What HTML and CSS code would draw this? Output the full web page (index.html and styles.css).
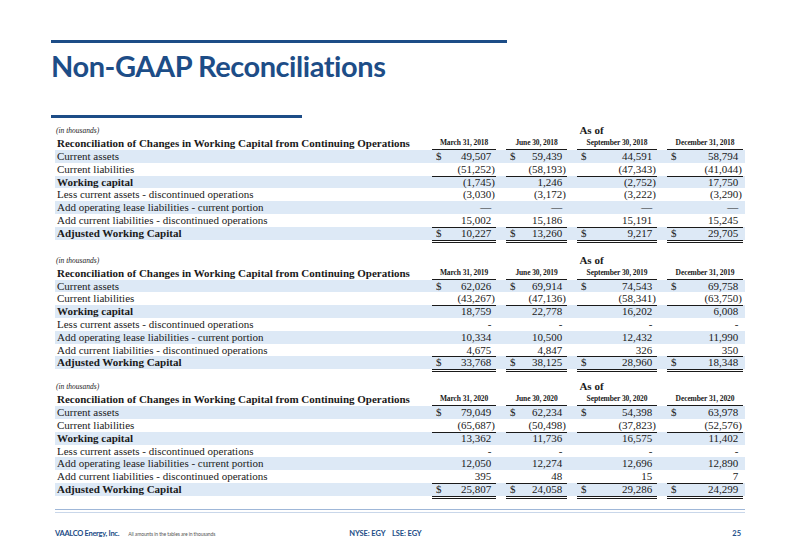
FILE: index.html
```html
<!DOCTYPE html>
<html lang="en">
<head>
<meta charset="utf-8">
<title>Non-GAAP Reconciliations</title>
<link rel="stylesheet" href="styles.css">
</head>
<body>
<div class="slide">
  <header class="head-block">
    <div class="rule rule-top"></div>
    <h1 class="title">Non-GAAP Reconciliations</h1>
    <div class="rule rule-sub"></div>
  </header>

  <main class="tables">
    <div class="recon">
      <div class="row cap"><span class="unit">(in thousands)</span><span class="asof">As of</span></div>
      <div class="row head"><span class="lbl">Reconciliation of Changes in Working Capital from Continuing Operations</span><span class="date">March 31, 2018</span><span class="date">June 30, 2018</span><span class="date">September 30, 2018</span><span class="date">December 31, 2018</span></div>
      <div class="row stripe"><span class="lbl">Current assets</span><span class="num"><i>$</i>49,507<b>)</b></span><span class="num"><i>$</i>59,439<b>)</b></span><span class="num"><i>$</i>44,591<b>)</b></span><span class="num"><i>$</i>58,794<b>)</b></span></div>
      <div class="row"><span class="lbl">Current liabilities</span><span class="num ul">(51,252)</span><span class="num ul">(58,193)</span><span class="num ul">(47,343)</span><span class="num ul">(41,044)</span></div>
      <div class="row stripe bold"><span class="lbl">Working capital</span><span class="num">(1,745)</span><span class="num">1,246<b>)</b></span><span class="num">(2,752)</span><span class="num">17,750<b>)</b></span></div>
      <div class="row"><span class="lbl">Less current assets - discontinued operations</span><span class="num">(3,030)</span><span class="num">(3,172)</span><span class="num">(3,222)</span><span class="num">(3,290)</span></div>
      <div class="row stripe"><span class="lbl">Add operating lease liabilities - current portion</span><span class="num">—<b>)</b></span><span class="num">—<b>)</b></span><span class="num">—<b>)</b></span><span class="num">—<b>)</b></span></div>
      <div class="row"><span class="lbl">Add current liabilities - discontinued operations</span><span class="num ul">15,002<b>)</b></span><span class="num ul">15,186<b>)</b></span><span class="num ul">15,191<b>)</b></span><span class="num ul">15,245<b>)</b></span></div>
      <div class="row stripe bold"><span class="lbl">Adjusted Working Capital</span><span class="num dbl"><i>$</i>10,227<b>)</b></span><span class="num dbl"><i>$</i>13,260<b>)</b></span><span class="num dbl"><i>$</i>9,217<b>)</b></span><span class="num dbl"><i>$</i>29,705<b>)</b></span></div>
    </div>

    <div class="recon">
      <div class="row cap"><span class="unit">(in thousands)</span><span class="asof">As of</span></div>
      <div class="row head"><span class="lbl">Reconciliation of Changes in Working Capital from Continuing Operations</span><span class="date">March 31, 2019</span><span class="date">June 30, 2019</span><span class="date">September 30, 2019</span><span class="date">December 31, 2019</span></div>
      <div class="row stripe"><span class="lbl">Current assets</span><span class="num"><i>$</i>62,026<b>)</b></span><span class="num"><i>$</i>69,914<b>)</b></span><span class="num"><i>$</i>74,543<b>)</b></span><span class="num"><i>$</i>69,758<b>)</b></span></div>
      <div class="row"><span class="lbl">Current liabilities</span><span class="num ul">(43,267)</span><span class="num ul">(47,136)</span><span class="num ul">(58,341)</span><span class="num ul">(63,750)</span></div>
      <div class="row stripe bold"><span class="lbl">Working capital</span><span class="num">18,759<b>)</b></span><span class="num">22,778<b>)</b></span><span class="num">16,202<b>)</b></span><span class="num">6,008<b>)</b></span></div>
      <div class="row"><span class="lbl">Less current assets - discontinued operations</span><span class="num">-<b>)</b></span><span class="num">-<b>)</b></span><span class="num">-<b>)</b></span><span class="num">-<b>)</b></span></div>
      <div class="row stripe"><span class="lbl">Add operating lease liabilities - current portion</span><span class="num">10,334<b>)</b></span><span class="num">10,500<b>)</b></span><span class="num">12,432<b>)</b></span><span class="num">11,990<b>)</b></span></div>
      <div class="row"><span class="lbl">Add current liabilities - discontinued operations</span><span class="num ul">4,675<b>)</b></span><span class="num ul">4,847<b>)</b></span><span class="num ul">326<b>)</b></span><span class="num ul">350<b>)</b></span></div>
      <div class="row stripe bold"><span class="lbl">Adjusted Working Capital</span><span class="num dbl"><i>$</i>33,768<b>)</b></span><span class="num dbl"><i>$</i>38,125<b>)</b></span><span class="num dbl"><i>$</i>28,960<b>)</b></span><span class="num dbl"><i>$</i>18,348<b>)</b></span></div>
    </div>

    <div class="recon">
      <div class="row cap"><span class="unit">(in thousands)</span><span class="asof">As of</span></div>
      <div class="row head"><span class="lbl">Reconciliation of Changes in Working Capital from Continuing Operations</span><span class="date">March 31, 2020</span><span class="date">June 30, 2020</span><span class="date">September 30, 2020</span><span class="date">December 31, 2020</span></div>
      <div class="row stripe"><span class="lbl">Current assets</span><span class="num"><i>$</i>79,049<b>)</b></span><span class="num"><i>$</i>62,234<b>)</b></span><span class="num"><i>$</i>54,398<b>)</b></span><span class="num"><i>$</i>63,978<b>)</b></span></div>
      <div class="row"><span class="lbl">Current liabilities</span><span class="num ul">(65,687)</span><span class="num ul">(50,498)</span><span class="num ul">(37,823)</span><span class="num ul">(52,576)</span></div>
      <div class="row stripe bold"><span class="lbl">Working capital</span><span class="num">13,362<b>)</b></span><span class="num">11,736<b>)</b></span><span class="num">16,575<b>)</b></span><span class="num">11,402<b>)</b></span></div>
      <div class="row"><span class="lbl">Less current assets - discontinued operations</span><span class="num">-<b>)</b></span><span class="num">-<b>)</b></span><span class="num">-<b>)</b></span><span class="num">-<b>)</b></span></div>
      <div class="row stripe"><span class="lbl">Add operating lease liabilities - current portion</span><span class="num">12,050<b>)</b></span><span class="num">12,274<b>)</b></span><span class="num">12,696<b>)</b></span><span class="num">12,890<b>)</b></span></div>
      <div class="row"><span class="lbl">Add current liabilities - discontinued operations</span><span class="num ul">395<b>)</b></span><span class="num ul">48<b>)</b></span><span class="num ul">15<b>)</b></span><span class="num ul">7<b>)</b></span></div>
      <div class="row stripe bold"><span class="lbl">Adjusted Working Capital</span><span class="num dbl"><i>$</i>25,807<b>)</b></span><span class="num dbl"><i>$</i>24,058<b>)</b></span><span class="num dbl"><i>$</i>29,286<b>)</b></span><span class="num dbl"><i>$</i>24,299<b>)</b></span></div>
    </div>
  </main>

  <footer class="foot">
    <div class="foot-rule"></div>
    <div class="foot-text">
      <span class="co">VAALCO Energy, Inc.</span>
      <span class="note">All amounts in the tables are in thousands</span>
      <span class="tick">NYSE: EGY&nbsp;&nbsp;&nbsp;&nbsp;LSE: EGY</span>
      <span class="page">25</span>
    </div>
  </footer>
</div>
</body>
</html>
```

FILE: styles.css
```css
* { box-sizing: border-box; }
html, body { margin: 0; padding: 0; background: #fff; }
body { width: 800px; height: 554px; overflow: hidden; }

.slide {
  width: 800px;
  height: 554px;
  padding: 40px 0 0 0;
  display: flex;
  flex-direction: column;
}

.head-block { padding-left: 51px; }
.rule { background: #1d4d87; height: 3px; }
.rule-top { width: 456px; }
.rule-sub { width: 251px; margin-top: 10px; }

.title {
  margin: 0;
  padding-top: 5px;
  font-family: Lato, "Open Sans", sans-serif;
  font-weight: 700;
  font-size: 29px;
  line-height: 36px;
  height: 62px;
  color: #1d4d87;
  letter-spacing: -0.45px;
}

.tables {
  padding-left: 55px;
  margin-top: 6px;
  display: flex;
  flex-direction: column;
  font-family: "Liberation Serif", "Times New Roman", serif;
  color: #1a1a1a;
}
.recon:nth-child(2) { margin-top: 14px; }
.recon:nth-child(3) { margin-top: 11px; }

.recon { width: 690px; }

.row {
  display: grid;
  grid-template-columns: 367px 64px 61px 80px 76px;
  column-gap: 10px;
  padding-right: 2px;
  height: 12.8px;
  font-size: 11px;
  line-height: 12.8px;
  white-space: nowrap;
}
.row.stripe { background: #dde9f6; }
.row.bold { font-weight: 700; }

.lbl { padding-left: 2px; }

.cap { height: 13px; line-height: 13px; }
.unit { font-style: italic; font-size: 7.5px; padding-left: 1px; }
.asof {
  grid-column: 2 / 6;
  text-align: center;
  font-weight: 700;
  font-size: 11px;
  padding-left: 8px;
}

.head { height: 13px; line-height: 12px; font-weight: 700; }
.head .lbl { padding-left: 2px; font-size: 11px; }
.date {
  font-size: 7.5px;
  text-align: center;
  border-bottom: 1.6px solid #1a1a1a;
  letter-spacing: -0.1px;
}

.num {
  display: flex;
  justify-content: flex-end;
  padding: 0 1px 0 4px;
  font-weight: 400;
}
.row.bold .num { font-weight: 400; }
.num i { font-style: normal; margin-right: auto; }
.num b { visibility: hidden; font-weight: 400; }
.num.ul { border-bottom: 1px solid #1a1a1a; }
.num.dbl { border-bottom: 3px double #1a1a1a; }

.foot { margin-top: auto; padding: 0 55px 13px 55px; }
.foot-rule {
  height: 4px;
  border-top: 1px solid #9fb7d8;
  border-bottom: 1px solid #c9d7ea;
}
.foot-text {
  display: flex;
  align-items: baseline;
  margin-top: 16px;
  height: 12px;
  font-family: Lato, "Open Sans", sans-serif;
  color: #1d4d87;
  white-space: nowrap;
}
.co { font-size: 7.5px; font-weight: 700; letter-spacing: -0.3px; }
.note { font-size: 5px; color: #555; margin-left: 9px; letter-spacing: -0.1px; }
.tick { font-size: 7.5px; font-weight: 700; margin-left: 134px; letter-spacing: -0.1px; }
.page { font-size: 7.5px; font-weight: 700; margin-left: auto; margin-right: 4px; }
```
